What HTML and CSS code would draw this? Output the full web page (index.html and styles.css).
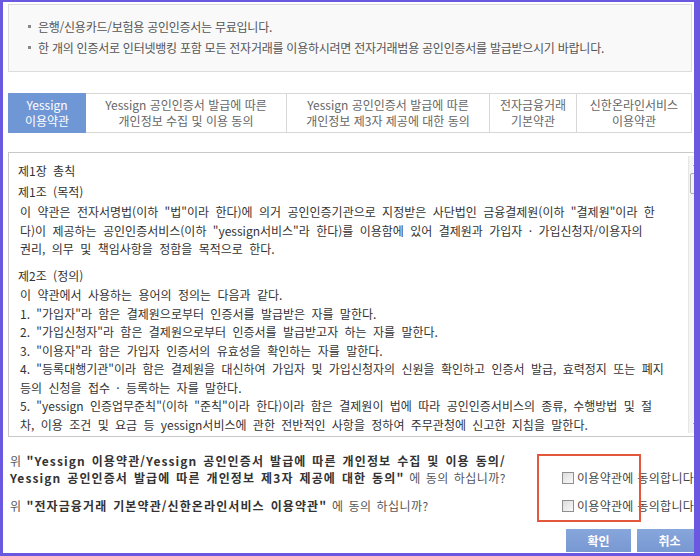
FILE: index.html
```html
<!DOCTYPE html>
<html lang="ko">

<head>
    <meta charset="UTF-8">
    <meta name="viewport" content="width=device-width, initial-scale=1.0">
    <title>공인인증서 약관 동의</title>
    <link rel="stylesheet" href="styles.css">
</head>

<body>
    <div class="popup">
        <!-- 안내 박스 -->
        <div class="notice__box">
            <ul>
                <li>은행/신용카드/보험용 공인인증서는 무료입니다.</li>
                <li>한 개의 인증서로 인터넷뱅킹 포함 모든 전자거래를 이용하시려면 전자거래범용 공인인증서를 발급받으시기 바랍니다.</li>
            </ul>
        </div>

        <!-- 약관 탭 -->
        <ul class="terms__tab">
            <li class="tab1 active">Yessign<br>이용약관</li>
            <li class="tab2">Yessign 공인인증서 발급에 따른<br>개인정보 수집 및 이용 동의</li>
            <li class="tab3">Yessign 공인인증서 발급에 따른<br>개인정보 제3자 제공에 대한 동의</li>
            <li class="tab4">전자금융거래<br>기본약관</li>
            <li class="tab5">신한온라인서비스<br>이용약관</li>
        </ul>

        <!-- 약관 내용 -->
        <div class="terms__box">
            <div class="terms__text">
                <h3 class="chapter">제1장 총칙</h3>
                <h4>제1조 (목적)</h4>
                <p>이 약관은 전자서명법(이하 "법"이라 한다)에 의거 공인인증기관으로 지정받은 사단법인 금융결제원(이하 "결제원"이라 한<br>다)이 제공하는 공인인증서비스(이하 "yessign서비스"라 한다)를 이용함에 있어 결제원과 가입자 · 가입신청자/이용자의<br>권리, 의무 및 책임사항을 정함을 목적으로 한다.</p>
                <h4 class="gap">제2조 (정의)</h4>
                <p class="lead">이 약관에서 사용하는 용어의 정의는 다음과 같다.</p>
                <ol>
                    <li>1. "가입자"라 함은 결제원으로부터 인증서를 발급받은 자를 말한다.</li>
                    <li>2. "가입신청자"라 함은 결제원으로부터 인증서를 발급받고자 하는 자를 말한다.</li>
                    <li>3. "이용자"라 함은 가입자 인증서의 유효성을 확인하는 자를 말한다.</li>
                    <li>4. "등록대행기관"이라 함은 결제원을 대신하여 가입자 및 가입신청자의 신원을 확인하고 인증서 발급, 효력정지 또는 폐지<br>등의 신청을 접수 · 등록하는 자를 말한다.</li>
                    <li>5. "yessign 인증업무준칙"(이하 "준칙"이라 한다)이라 함은 결제원이 법에 따라 공인인증서비스의 종류, 수행방법 및 절<br>차, 이용 조건 및 요금 등 yessign서비스에 관한 전반적인 사항을 정하여 주무관청에 신고한 지침을 말한다.</li>
                </ol>
            </div>
            <div class="scrollbar">
                <span class="arrow up"></span>
                <span class="thumb"></span>
                <span class="track"></span>
                <span class="arrow down"></span>
            </div>
        </div>

        <!-- 동의 영역 -->
        <div class="agree__wrap">
            <div class="agree__row">
                <p class="question">위 <strong>"Yessign 이용약관/Yessign 공인인증서 발급에 따른 개인정보 수집 및 이용 동의/<br>Yessign 공인인증서 발급에 따른 개인정보 제3자 제공에 대한 동의"</strong> 에 동의 하십니까?</p>
                <label class="check"><span class="box"></span>이용약관에 동의합니다</label>
            </div>
            <div class="agree__row second">
                <p class="question">위 <strong>"전자금융거래 기본약관/신한온라인서비스 이용약관"</strong> 에 동의 하십니까?</p>
                <label class="check"><span class="box"></span>이용약관에 동의합니다</label>
            </div>
            <div class="highlight"></div>
        </div>

        <div class="buttons">
            <button class="ok">확인</button>
            <button class="cancel">취소</button>
        </div>
    </div>
</body>

</html>
```

FILE: styles.css
```css
* {
    margin: 0;
    padding: 0;
    box-sizing: border-box;
}

body {
    background-color: #fff;
    font-family: "Noto Sans CJK KR", "Noto Sans", sans-serif;
    font-size: 12px;
    color: #444;
    overflow: hidden;
}

li {
    list-style: none;
}

.popup {
    width: 700px;
    height: 556px;
    border-style: solid;
    border-color: #6b58e0;
    border-width: 2px 6px 3px 3px;
    overflow: hidden;
    background-color: #fff;
}

/* 안내 박스 */
.notice__box {
    margin: 2px 2px 0 5px;
    height: 68px;
    padding: 11px 0 0 19px;
    border: 1px solid #dcdcdc;
    background-color: #f9f9f9;
}

.notice__box li {
    position: relative;
    padding-left: 10px;
    line-height: 21px;
    letter-spacing: -0.25px;
    color: #555;
}

.notice__box li::before {
    content: "";
    position: absolute;
    left: 0;
    top: 9px;
    width: 3px;
    height: 3px;
    background-color: #888;
}

/* 탭 */
.terms__tab {
    display: flex;
    margin: 21px 2px 0 5px;
    height: 40px;
}

.terms__tab li {
    display: flex;
    align-items: center;
    justify-content: center;
    text-align: center;
    line-height: 16px;
    color: #666;
    border: 1px solid #d8d8d8;
    border-left: none;
    background-color: #fff;
}

.terms__tab li.tab1 {
    width: 78px;
    border-left: 1px solid #d8d8d8;
}

.terms__tab li.tab2 {
    width: 201px;
}

.terms__tab li.tab3 {
    width: 203px;
}

.terms__tab li.tab4 {
    width: 87px;
}

.terms__tab li.tab5 {
    flex: 1;
}

.terms__tab li.active {
    background-color: #7097d5;
    border-color: #7097d5;
    color: #fff;
}

/* 약관 내용 */
.terms__box {
    display: flex;
    margin: 19px -12px 0 5px;
    height: 285px;
    border: 1px solid #c8c8c8;
    overflow: hidden;
}

.terms__text {
    flex: 1;
    padding: 9px 0 0 9px;
    line-height: 18.5px;
    word-spacing: 3px;
    color: #333;
    word-break: break-all;
}

.terms__text h3,
.terms__text h4 {
    font-size: 12px;
    font-weight: normal;
}

.terms__text h4 {
    margin-top: 2px;
}

.terms__text h4.gap {
    margin-top: 8px;
}

.terms__text p,
.terms__text ol {
    padding-left: 2px;
}

.terms__text p {
    margin-top: 2px;
}

.terms__text p.lead {
    margin-top: 1px;
}

.scrollbar {
    display: flex;
    flex-direction: column;
    width: 17px;
    margin: 3px 0 3px 0;
    background-color: #f4f4f4;
    border-left: 1px solid #e6e6e6;
}

.scrollbar .arrow {
    position: relative;
    height: 17px;
}

.scrollbar .arrow::before {
    content: "";
    position: absolute;
    left: 4px;
    top: 7px;
    border-left: 3px solid transparent;
    border-right: 3px solid transparent;
}

.scrollbar .arrow.up::before {
    border-bottom: 3px solid #555;
}

.scrollbar .arrow.down::before {
    border-top: 3px solid #555;
}

.scrollbar .thumb {
    position: relative;
    height: 21px;
    margin: 0 1px;
    border: 1px solid #a9a9a9;
    border-radius: 2px;
    background: linear-gradient(to right, #f6f6f6, #e2e2e2);
}

.scrollbar .thumb::before {
    content: "";
    position: absolute;
    left: 3px;
    top: 6px;
    width: 6px;
    height: 7px;
    border-top: 1px solid #777;
    border-bottom: 1px solid #777;
    background: linear-gradient(#fff 0 2px, #777 2px 3px, #fff 3px);
}

.scrollbar .track {
    flex: 1;
}

/* 동의 영역 */
.agree__wrap {
    position: relative;
    margin-top: 15px;
    padding-left: 7px;
}

.agree__row {
    display: flex;
    align-items: flex-end;
}

.agree__row.second {
    margin-top: 11px;
}

.question {
    flex: 0 0 552px;
    line-height: 17px;
    color: #555;
    letter-spacing: 0.5px;
    word-spacing: 1px;
}

.question strong {
    color: #333;
    font-weight: bold;
    letter-spacing: 1.1px;
    word-spacing: 1.5px;
}

.check {
    display: flex;
    align-items: center;
    white-space: nowrap;
    line-height: 17px;
    color: #444;
    font-size: 12px;
    letter-spacing: 0.3px;
}

.check .box {
    width: 12px;
    height: 12px;
    margin-right: 3px;
    border: 1px solid #8e8f8f;
    background: linear-gradient(135deg, #dcdcdc, #fafafa);
}

.highlight {
    position: absolute;
    left: 534px;
    top: 2px;
    width: 104px;
    height: 68px;
    border: 2px solid #e4573d;
}

/* 버튼 */
.buttons {
    display: flex;
    gap: 6px;
    margin-top: 15px;
    padding-left: 563px;
}

.buttons button {
    flex-shrink: 0;
    width: 65px;
    height: 23px;
    border: none;
    background: linear-gradient(#87a6dc, #7898d2);
    color: #fff;
    font-family: "Noto Sans CJK KR", sans-serif;
    font-size: 12px;
    font-weight: bold;
}
```
